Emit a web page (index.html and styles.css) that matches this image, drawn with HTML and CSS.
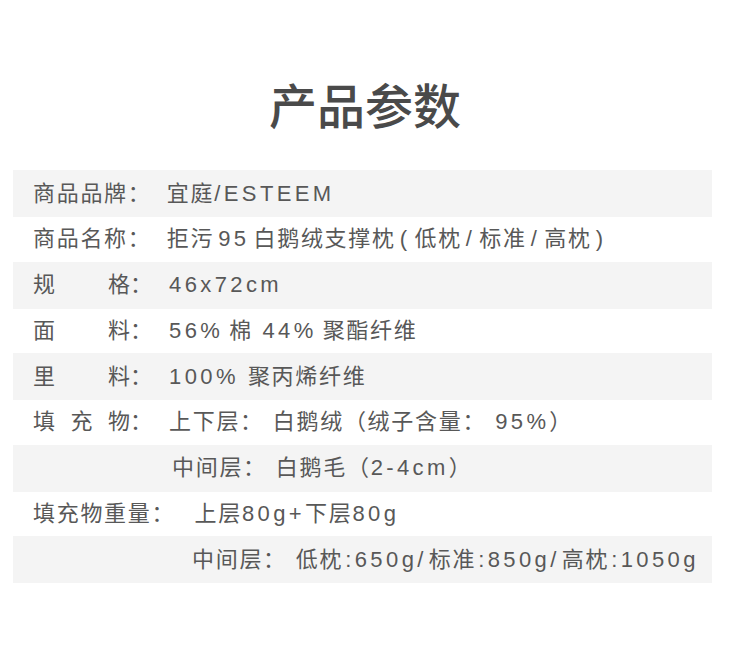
FILE: index.html
```html
<!DOCTYPE html>
<html lang="zh-CN">
<head>
<meta charset="utf-8">
<title>产品参数</title>
<link rel="stylesheet" href="styles.css">
</head>
<body>
<div class="page">
  <h1 class="title">产品参数</h1>
  <div class="spec">
    <div class="row alt"><span class="label">商品品牌</span><span class="colon">：</span><span class="value">宜庭<span class="n">/ESTEEM</span></span></div>
    <div class="row"><span class="label">商品名称</span><span class="colon">：</span><span class="value">拒污<span class="n as">95</span>白鹅绒支撑枕<span class="n as">(</span>低枕<span class="n as">/</span>标准<span class="n as">/</span>高枕<span class="n as-l">)</span></span></div>
    <div class="row alt"><span class="label spread">规格</span><span class="colon">：</span><span class="value"><span class="n">46x72cm</span></span></div>
    <div class="row"><span class="label spread">面料</span><span class="colon">：</span><span class="value"><span class="n as-r">56%</span>棉<span class="n as-r"> 44%</span>聚酯纤维</span></div>
    <div class="row alt"><span class="label spread">里料</span><span class="colon">：</span><span class="value"><span class="n as-rw">100%</span>聚丙烯纤维</span></div>
    <div class="row"><span class="label spread">填充物</span><span class="colon">：</span><span class="value">上下层：<span class="gap"></span>白鹅绒（绒子含量：<span class="gap"></span><span class="n">95%</span>）</span></div>
    <div class="row alt"><span class="value indent-a">中间层：<span class="gap"></span>白鹅毛（<span class="n">2-4cm</span>）</span></div>
    <div class="row"><span class="label">填充物重量</span><span class="colon">：</span><span class="value"><span class="gap-s"></span>上层<span class="n">80g+</span>下层<span class="n">80g</span></span></div>
    <div class="row alt"><span class="value indent-b">中间层：<span class="gap"></span>低枕<span class="n as-s">:650g/</span>标准<span class="n as-s">:850g/</span>高枕<span class="n as-sl">:1050g</span></span></div>
  </div>
</div>
</body>
</html>
```

FILE: styles.css
```css
html, body {
  margin: 0;
  padding: 0;
  background: #ffffff;
}

.page {
  width: 730px;
  padding-top: 79px;
  font-family: "Liberation Sans", "Noto Sans CJK SC", sans-serif;
  color: #585858;
}

.title {
  margin: 0 0 43px 0;
  font-family: "Noto Sans CJK SC", sans-serif;
  font-size: 48px;
  line-height: 48px;
  font-weight: 500;
  color: #4a4a4a;
  text-align: center;
  letter-spacing: 0;
}

.spec {
  margin-left: 13px;
  width: 699px;
  display: flex;
  flex-direction: column;
}

.row {
  display: flex;
  align-items: center;
  height: 44.5px;
  padding-left: 20px;
  font-size: 22px;
  line-height: 1;
  letter-spacing: 1.7px;
  white-space: nowrap;
}

.row.alt {
  height: 47px;
  background: #f4f4f4;
}

.label {
  display: inline-block;
}

.label.spread {
  width: 97px;
  letter-spacing: 0;
  text-align: justify;
  text-align-last: justify;
}

.colon {
  display: inline-block;
  width: 24px;
  letter-spacing: 0;
}

.value {
  margin-left: 15px;
}

.n {
  letter-spacing: 3.4px;
}

.as {
  margin: 0 4px;
}

.as-l {
  margin-left: 4px;
}

.as-r {
  margin-right: 6px;
}

.as-rw {
  margin-right: 9px;
}

.as-s {
  margin: 0 2px;
}

.as-sl {
  margin-left: 2px;
}

.gap {
  display: inline-block;
  width: 9px;
}

.gap-s {
  display: inline-block;
  width: 4px;
}

.value.indent-a {
  margin-left: 139px;
}

.value.indent-b {
  margin-left: 159px;
}
```
